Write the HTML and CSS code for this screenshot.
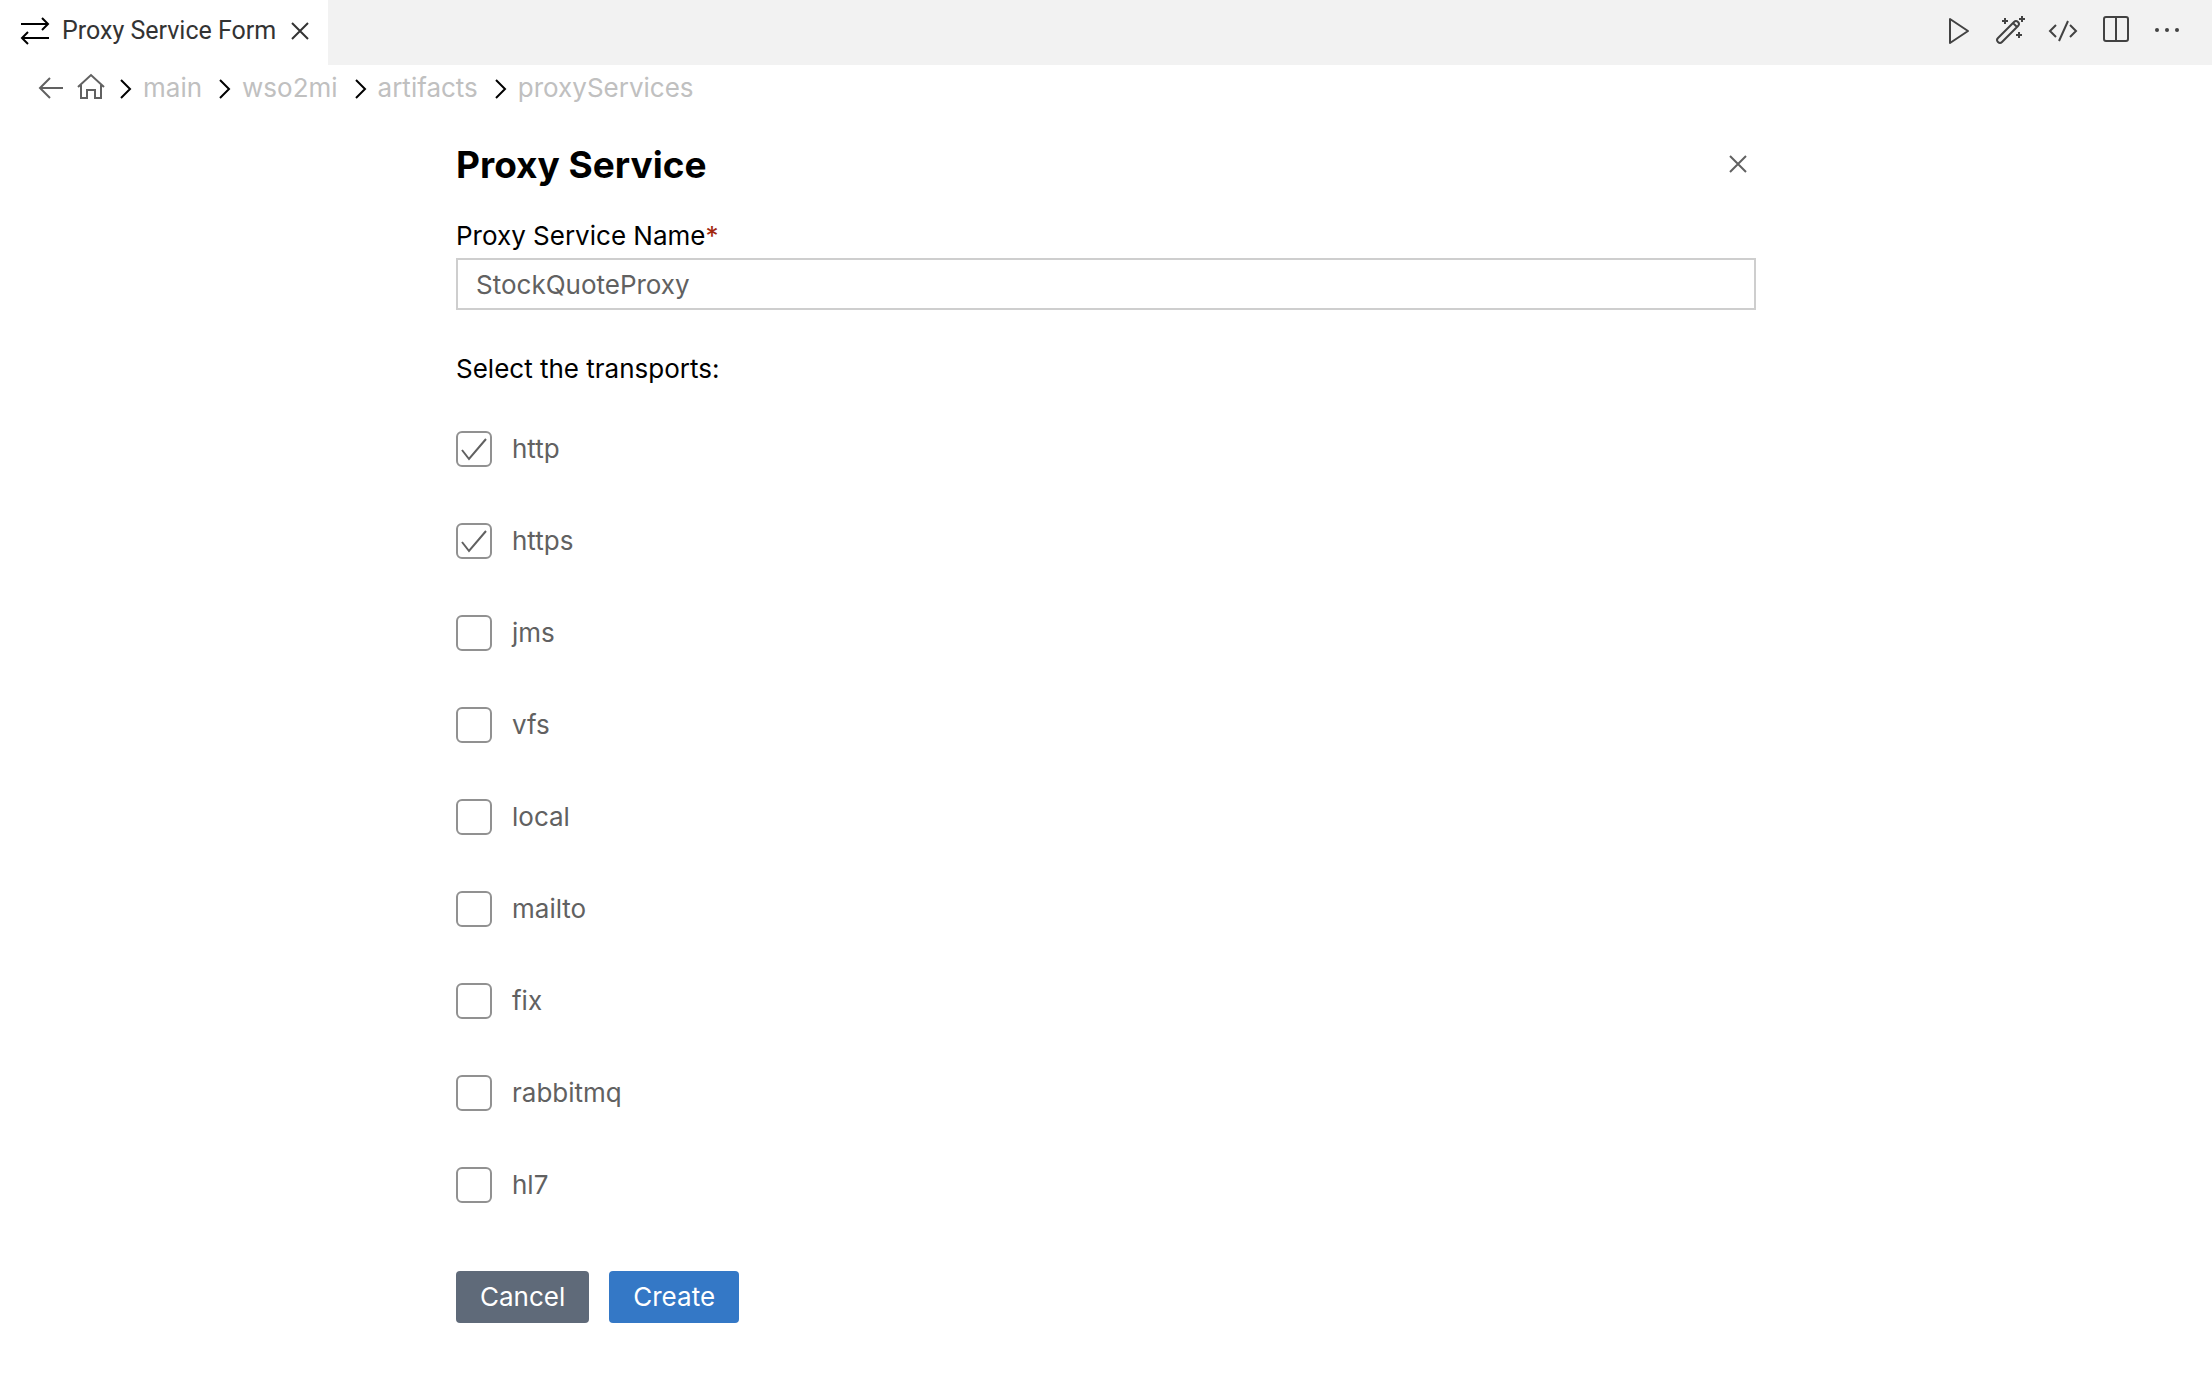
FILE: index.html
```html
<!DOCTYPE html>
<html lang="en">
<head>
<meta charset="utf-8">
<meta name="viewport" content="width=device-width, initial-scale=1">
<title>Proxy Service Form</title>
<link rel="stylesheet" href="styles.css">
</head>
<body>
<header class="tab-bar">
  <div class="tab">
    <svg class="icon" viewBox="0 0 32 32" aria-hidden="true"><path d="M2 9h27M23 3l6 6-6 6M30 23H3M9 17l-6 6 6 6"/></svg>
    <span class="tab-title">Proxy Service Form</span>
    <button class="icon-button" type="button" aria-label="Close tab"><svg class="icon" viewBox="0 0 32 32"><path d="M8 8l16 16M24 8L8 24"/></svg></button>
  </div>
  <div class="actions">
    <button class="icon-button" type="button" aria-label="Run"><svg class="icon" viewBox="0 0 32 32"><path d="M7 5v24l18-12z" stroke-linejoin="round"/></svg></button>
    <button class="icon-button" type="button" aria-label="Generate"><svg class="icon" viewBox="0 0 32 32"><path d="M3 24L19 8a2.5 2.5 0 0 1 4 4L7 28a2.5 2.5 0 0 1-4-4zM18 9l4 4M10 4v6M7 7h6M27 2v6M24 5h6M24 18v6M21 21h6"/></svg></button>
    <button class="icon-button" type="button" aria-label="Show source"><svg class="icon" viewBox="0 0 32 32"><path d="M9 11l-6 6 6 6M23 11l6 6-6 6M21 7l-9 20"/></svg></button>
    <button class="icon-button" type="button" aria-label="Split editor"><svg class="icon" viewBox="0 0 32 32"><rect x="5" y="3" width="24" height="24" rx="2"/><path d="M17 3v24"/></svg></button>
    <button class="icon-button" type="button" aria-label="More actions"><svg class="icon icon-dots" viewBox="0 0 32 32"><circle cx="6" cy="16" r="2"/><circle cx="16" cy="16" r="2"/><circle cx="26" cy="16" r="2"/></svg></button>
  </div>
</header>

<nav class="breadcrumbs" aria-label="Breadcrumb">
  <button class="icon-button crumb-icon" type="button" aria-label="Back"><svg class="icon" viewBox="0 0 32 32"><path d="M28 16H5M15 6L5 16l10 10"/></svg></button>
  <button class="icon-button crumb-icon" type="button" aria-label="Home"><svg class="icon" viewBox="0 0 32 32"><path d="M3 15L16 3l13 12M6 13v13h6v-8h8v8h6V13"/></svg></button>
  <ol class="crumbs">
    <li class="crumb"><svg class="chevron" viewBox="0 0 12 20" aria-hidden="true"><path d="M1 2l9 9-9 9"/></svg><a href="#main">main</a></li>
    <li class="crumb"><svg class="chevron" viewBox="0 0 12 20" aria-hidden="true"><path d="M1 2l9 9-9 9"/></svg><a href="#wso2mi">wso2mi</a></li>
    <li class="crumb"><svg class="chevron" viewBox="0 0 12 20" aria-hidden="true"><path d="M1 2l9 9-9 9"/></svg><a href="#artifacts">artifacts</a></li>
    <li class="crumb"><svg class="chevron" viewBox="0 0 12 20" aria-hidden="true"><path d="M1 2l9 9-9 9"/></svg><a href="#proxyServices">proxyServices</a></li>
  </ol>
</nav>

<main class="page">
  <div class="page-header">
    <h1 class="page-title">Proxy Service</h1>
    <button class="icon-button" type="button" aria-label="Close form"><svg class="icon" viewBox="0 0 32 32"><path d="M8 7l16 16M24 7L8 23"/></svg></button>
  </div>
  <form class="form">
    <label class="label" for="name">Proxy Service Name<span class="required">*</span></label>
    <input class="text-field" id="name" type="text" value="StockQuoteProxy" required>
    <fieldset class="transports">
      <legend class="label">Select the transports:</legend>
      <div class="options">
        <label class="option"><input class="checkbox" type="checkbox" checked>http</label>
        <label class="option"><input class="checkbox" type="checkbox" checked>https</label>
        <label class="option"><input class="checkbox" type="checkbox">jms</label>
        <label class="option"><input class="checkbox" type="checkbox">vfs</label>
        <label class="option"><input class="checkbox" type="checkbox">local</label>
        <label class="option"><input class="checkbox" type="checkbox">mailto</label>
        <label class="option"><input class="checkbox" type="checkbox">fix</label>
        <label class="option"><input class="checkbox" type="checkbox">rabbitmq</label>
        <label class="option"><input class="checkbox" type="checkbox">hl7</label>
      </div>
    </fieldset>
    <div class="buttons">
      <button class="button button-secondary" type="button">Cancel</button>
      <button class="button button-primary" type="submit">Create</button>
    </div>
  </form>
</main>
</body>
</html>
```
FILE: styles.css
```css
* {
  box-sizing: border-box;
}

body {
  margin: 0;
  background: #fff;
  color: #616161;
  font: 26px/32px Inter, "Liberation Sans", sans-serif;
}

button,
input {
  font: inherit;
}

.icon {
  display: block;
  width: 32px;
  height: 32px;
  fill: none;
  stroke: currentColor;
  stroke-width: 2;
}

.icon-dots {
  fill: currentColor;
  stroke: none;
}

.icon-button {
  display: grid;
  place-items: center;
  padding: 0;
  border: 0;
  background: none;
  color: inherit;
}

.tab-bar {
  display: flex;
  justify-content: space-between;
  min-height: 65px;
  background: #f2f2f2;
  color: #424242;
}

.tab {
  display: flex;
  align-items: center;
  padding: 0 12px 4px 19px;
  background: #fff;
  color: #333;
}

.tab > .icon {
  color: #000;
}

.tab-title {
  margin: 0 8px 0 11px;
  font-family: Roboto, "Liberation Sans", sans-serif;
  font-size: 25px;
}

.actions {
  display: flex;
  align-items: center;
  gap: 20px;
  padding: 0 29px 5px 20px;
}

.breadcrumbs {
  display: flex;
  align-items: center;
  gap: 8px;
  height: 46px;
  padding-left: 35px;
}

.crumbs {
  display: flex;
  align-items: center;
  gap: 17px;
  margin: 0;
  padding: 0 0 0 5px;
  list-style: none;
}

.crumb {
  display: flex;
  align-items: center;
  gap: 11px;
}

.crumb a {
  color: #c0c0c0;
  text-decoration: none;
}

.chevron {
  width: 12px;
  height: 20px;
  overflow: visible;
  fill: none;
  stroke: #000;
  stroke-width: 2;
}

.page {
  max-width: 1300px;
  margin: 30px auto 0;
}

.page-header {
  display: flex;
  align-items: center;
  justify-content: space-between;
  margin-bottom: 31px;
  padding-right: 2px;
}

.page-title {
  margin: 0;
  color: #000;
  font-size: 37px;
  font-weight: 700;
  line-height: 48px;
}

.label {
  display: block;
  padding: 0;
  color: #000;
}

.required {
  color: #a1260d;
}

.text-field {
  display: block;
  width: 100%;
  height: 52px;
  margin-top: 6px;
  padding: 0 18px;
  border: 2px solid #cecece;
  background: #fff;
  color: #616161;
}

.transports {
  margin: 43px 0 0;
  padding: 0;
  border: 0;
}

.options {
  display: flex;
  flex-direction: column;
  align-items: flex-start;
  gap: 56px;
  margin-top: 46px;
}

.option {
  display: flex;
  align-items: center;
  gap: 20px;
  height: 36px;
}

.checkbox {
  width: 36px;
  height: 36px;
  margin: 0;
  border: 2px solid #919191;
  border-radius: 6px;
  appearance: none;
  background: #fff;
}

.checkbox:checked {
  background: #fff url("data:image/svg+xml,%3Csvg xmlns='http://www.w3.org/2000/svg' viewBox='0 0 32 32' fill='none' stroke='%23616161' stroke-width='2'%3E%3Cpath d='M4 17l7 9L28 6'/%3E%3C/svg%3E") center / 32px 32px no-repeat;
}

.buttons {
  display: flex;
  gap: 20px;
  margin-top: 68px;
}

.button {
  height: 52px;
  padding: 0 24px;
  border: 0;
  border-radius: 4px;
  color: #fff;
}

.button-secondary {
  background: #5f6a79;
}

.button-primary {
  background: #3478c6;
}
```
